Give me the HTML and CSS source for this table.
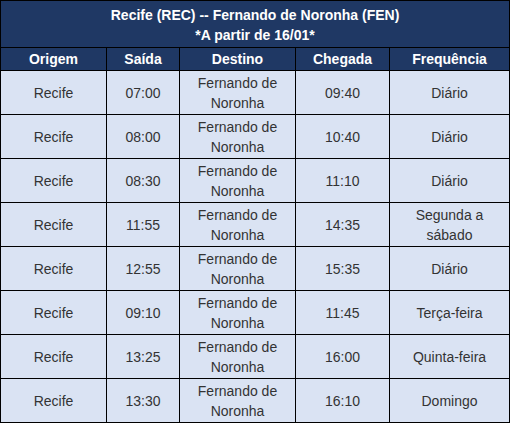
FILE: index.html
```html
<!DOCTYPE html>
<html lang="pt">
<head>
<meta charset="utf-8">
<link rel="stylesheet" href="styles.css">
</head>
<body>
<table class="voos">
  <colgroup>
    <col class="c1"><col class="c2"><col class="c3"><col class="c4"><col class="c5">
  </colgroup>
  <thead>
    <tr><th class="titulo" colspan="5">Recife (REC) -- Fernando de Noronha (FEN)<br>*A partir de 16/01*</th></tr>
    <tr class="cab"><th>Origem</th><th>Saída</th><th>Destino</th><th>Chegada</th><th>Frequência</th></tr>
  </thead>
  <tbody>
    <tr><td>Recife</td><td>07:00</td><td>Fernando de Noronha</td><td>09:40</td><td>Diário</td></tr>
    <tr><td>Recife</td><td>08:00</td><td>Fernando de Noronha</td><td>10:40</td><td>Diário</td></tr>
    <tr><td>Recife</td><td>08:30</td><td>Fernando de Noronha</td><td>11:10</td><td>Diário</td></tr>
    <tr><td>Recife</td><td>11:55</td><td>Fernando de Noronha</td><td>14:35</td><td>Segunda a sábado</td></tr>
    <tr><td>Recife</td><td>12:55</td><td>Fernando de Noronha</td><td>15:35</td><td>Diário</td></tr>
    <tr><td>Recife</td><td>09:10</td><td>Fernando de Noronha</td><td>11:45</td><td>Terça-feira</td></tr>
    <tr><td>Recife</td><td>13:25</td><td>Fernando de Noronha</td><td>16:00</td><td>Quinta-feira</td></tr>
    <tr><td>Recife</td><td>13:30</td><td>Fernando de Noronha</td><td>16:10</td><td>Domingo</td></tr>
  </tbody>
</table>
</body>
</html>
```
FILE: styles.css
```css
body {
  margin: 0;
  background: #ffffff;
  font-family: "Liberation Sans", Arial, sans-serif;
  font-size: 14px;
}
.voos {
  border-collapse: collapse;
  table-layout: fixed;
  width: 509px;
}
.c1 { width: 106px; }
.c2 { width: 73px; }
.c3 { width: 116px; }
.c4 { width: 94px; }
.c5 { width: 120px; }
.voos th,
.voos td {
  border: 1px solid #000;
  text-align: center;
  vertical-align: middle;
  line-height: 20px;
  padding: 2px 5px 1px;
}
.voos th {
  background: #1f3864;
  color: #ffffff;
  font-weight: bold;
}
.voos .titulo {
  padding: 4px 5px 2px;
}
.voos .cab th {
  padding: 1px 5px 1px;
}
.voos td {
  background: #dae3f3;
  color: #333333;
}
```
